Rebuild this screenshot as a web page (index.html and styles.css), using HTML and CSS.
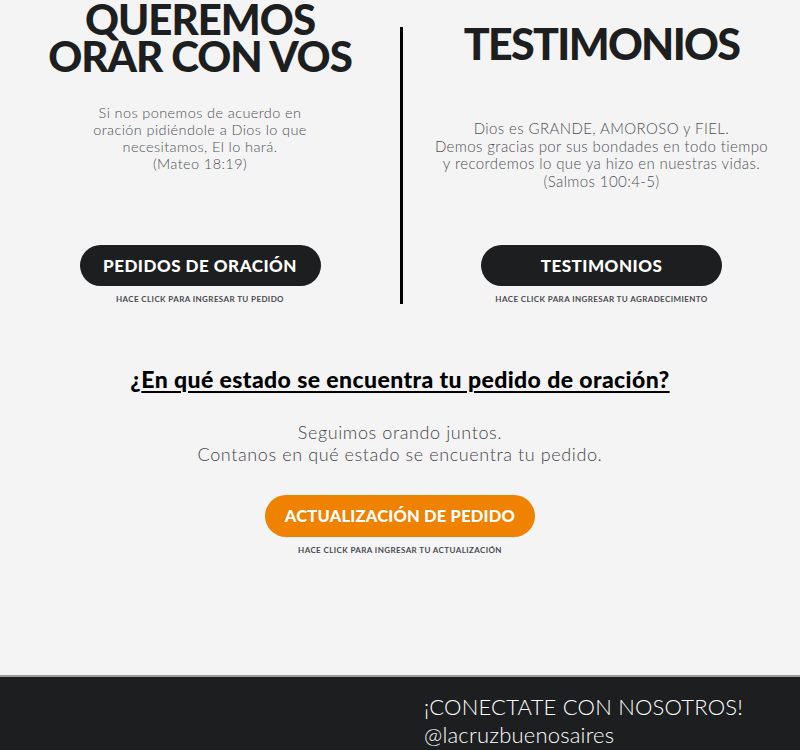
FILE: index.html
```html
<!DOCTYPE html>
<html lang="es">
<head>
<meta charset="utf-8">
<title>Oración</title>
<link rel="stylesheet" href="styles.css">
</head>
<body>
<main class="page">
  <section class="top">
    <div class="col col-left">
      <h2 class="title title-left">QUEREMOS<br>ORAR CON VOS</h2>
      <p class="text text-left">Si nos ponemos de acuerdo en<br>oración pidiéndole a Dios lo que<br>necesitamos, El lo hará.<br>(Mateo 18:19)</p>
      <div class="action">
        <a class="btn btn-dark" href="#">PEDIDOS DE ORACIÓN</a>
        <span class="hint">HACE CLICK PARA INGRESAR TU PEDIDO</span>
      </div>
    </div>
    <div class="divider"></div>
    <div class="col col-right">
      <h2 class="title title-right">TESTIMONIOS</h2>
      <p class="text text-right">Dios es GRANDE, AMOROSO y FIEL.<br>Demos gracias por sus bondades en todo tiempo<br>y recordemos lo que ya hizo en nuestras vidas.<br>(Salmos 100:4-5)</p>
      <div class="action">
        <a class="btn btn-dark" href="#">TESTIMONIOS</a>
        <span class="hint">HACE CLICK PARA INGRESAR TU AGRADECIMIENTO</span>
      </div>
    </div>
  </section>
  <section class="status">
    <h3 class="question">¿<u>En qué estado se encuentra tu pedido de oración?</u></h3>
    <p class="lead">Seguimos orando juntos.<br>Contanos en qué estado se encuentra tu pedido.</p>
    <div class="action">
      <a class="btn btn-orange" href="#">ACTUALIZACIÓN DE PEDIDO</a>
      <span class="hint">HACE CLICK PARA INGRESAR TU ACTUALIZACIÓN</span>
    </div>
  </section>
</main>
<footer class="footer">
  <div class="footer-spacer"></div>
  <div class="footer-text">
    <p class="connect">¡CONECTATE CON NOSOTROS!</p>
    <p class="handle">@lacruzbuenosaires</p>
  </div>
</footer>
</body>
</html>
```
FILE: styles.css
```css
html, body {
  margin: 0;
  padding: 0;
}
body {
  background: #f4f4f4;
  font-family: "Lato", "Liberation Sans", sans-serif;
  color: #1d1e20;
}
.page {
  height: 675px;
  overflow: hidden;
}
.top {
  display: flex;
  height: 305px;
}
.col {
  display: flex;
  flex-direction: column;
  align-items: center;
  text-align: center;
}
.col-left {
  width: 400px;
}
.col-right {
  flex: 1;
}
.divider {
  width: 3px;
  background: #000;
  margin-top: 27px;
  height: 277px;
  flex: none;
}
.title {
  margin: 0;
  font-family: "Lato", sans-serif;
  font-weight: 900;
  color: #1d1e20;
}
.title-left {
  font-size: 42px;
  line-height: 37px;
  letter-spacing: -1px;
  padding-top: 1px;
}
.title-right {
  font-size: 43px;
  line-height: 44px;
  letter-spacing: -1.7px;
  margin-top: 22px;
}
.text {
  margin: 0;
  font-weight: 300;
  color: #4f5156;
  font-size: 14.5px;
  line-height: 17px;
  letter-spacing: 0.4px;
}
.text-left {
  margin-top: 29px;
}
.text-right {
  margin-top: 54px;
  font-size: 15px;
  line-height: 17.5px;
}
.action {
  display: flex;
  flex-direction: column;
  align-items: center;
}
.col .action {
  margin-top: auto;
  margin-bottom: 1px;
}
.btn {
  display: flex;
  align-items: center;
  justify-content: center;
  height: 41px;
  border-radius: 21px;
  color: #fff;
  text-decoration: none;
  font-weight: 900;
  font-size: 17px;
  letter-spacing: 0.5px;
}
.btn-dark {
  width: 241px;
  background: #1d1e20;
}
.btn-orange {
  width: 270px;
  height: 42px;
  background: #ef8200;
  font-size: 16.5px;
  letter-spacing: 0.2px;
}
.hint {
  margin-top: 8px;
  font-size: 8px;
  font-weight: 700;
  color: #4a4b50;
  letter-spacing: 0.4px;
}
.status {
  display: flex;
  flex-direction: column;
  align-items: center;
  text-align: center;
  padding-top: 60px;
}
.question {
  margin: 0;
  font-size: 23px;
  font-weight: 900;
  color: #000;
  line-height: 28px;
  letter-spacing: 0.4px;
}
.question u {
  text-decoration-thickness: 2px;
  text-underline-offset: 3px;
}
.lead {
  margin: 28px 0 0;
  font-weight: 300;
  font-size: 18px;
  line-height: 22px;
  letter-spacing: 0.6px;
  color: #44454a;
}
.status .action {
  margin-top: 30px;
}
.footer {
  display: flex;
  background: #1d1e20;
  border-top: 2px solid #9a9a9a;
  height: 80px;
}
.footer-spacer {
  width: 424px;
  flex: none;
}
.footer-text {
  padding-top: 16px;
  color: #fff;
  font-weight: 300;
  font-size: 22px;
  line-height: 28px;
  letter-spacing: 0.2px;
}
.footer-text p {
  margin: 0;
}
```
